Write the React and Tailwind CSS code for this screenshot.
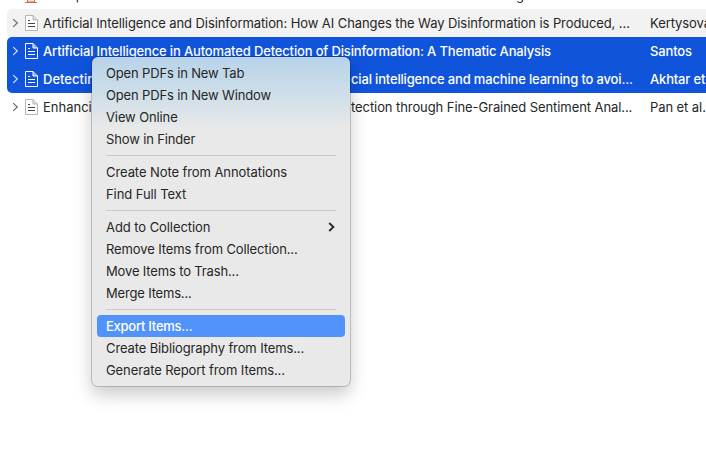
const rows = [
  { title: 'Artificial Intelligence and Disinformation: How AI Changes the Way Disinformation is Produced, ...', creator: 'Kertysova', cls: 'bg-[#f2f2f2] rounded-l-[5px] text-[#262626]', track: 'tracking-[-0.085px]' },
  { title: 'Artificial Intelligence in Automated Detection of Disinformation: A Thematic Analysis', creator: 'Santos', selected: true, cls: 'bg-[#1054dc] rounded-tl-[5px] text-white font-medium', track: 'tracking-[-0.155px]' },
  { head: 'Detecting', tail: 'cial intelligence and machine learning to avoi...', creator: 'Akhtar et al.', selected: true, cls: 'bg-[#1054dc] rounded-bl-[5px] text-white font-medium', track: 'tracking-[-0.17px]' },
  { head: 'Enhancing', tail: 'tection through Fine-Grained Sentiment Anal...', creator: 'Pan et al.', cls: 'text-[#262626]', track: 'tracking-[-0.08px]' },
];

function DocIcon({ selected }) {
  const edge = selected ? '#ffffff' : '#b5b5b5';
  const line = selected ? '#ffffff' : '#444444';
  return (
    <svg className="ml-[6px] h-4 w-[13px] shrink-0" viewBox="0 0 13 16" fill="none">
      <path d="M.5.5H8l4.5 4.5v10.500H.5z" fill={selected ? 'none' : '#fff'} stroke={edge} />
      <path d="M8 .5V5h4.500" stroke={edge} fill={selected ? '#8fb0f0' : '#dddddd'} />
      <path d="M3 5.500h2M3 8.500h7M3 11.500h7" stroke={line} />
    </svg>
  );
}

function Row({ row }) {
  return (
    <div className={'flex h-7 items-center pl-[5px] ' + row.cls}>
      <svg className="h-[10px] w-[7px] shrink-0" viewBox="0 0 7 10" fill="none">
        <path d="M1.200 1.200L5.300 5 1.200 8.800" stroke={row.selected ? '#dce6fb' : '#666'} strokeWidth="1.150" />
      </svg>
      <DocIcon selected={row.selected} />
      <div className="ml-[5px] flex w-[607px] shrink-0 pt-[2px]">
        {row.title ? <span className={row.track}>{row.title}</span> : (
          <>
            <span className="w-[308px] shrink-0">{row.head}</span>
            <span className={row.track}>{row.tail}</span>
          </>
        )}
      </div>
      <span className={'pt-[2px] ' + row.track}>{row.creator}</span>
    </div>
  );
}

function Item({ children, active, arrow, track = 'tracking-[-0.12px]' }) {
  return (
    <div className={'mx-[5px] flex h-[22px] items-center justify-between rounded-[4px] px-[9px] ' + (active ? 'bg-[#5293fb] font-medium text-white' : '')}>
      <span className={'pt-[2px] ' + track}>{children}</span>
      {arrow && (
        <svg className="mr-px h-[10px] w-[7px]" viewBox="0 0 7 10" fill="none">
          <path d="M1.200 1L5.400 5 1.200 9" stroke="#262626" strokeWidth="1.800" />
        </svg>
      )}
    </div>
  );
}

const Divider = () => <div className="mx-[14px] flex h-[11px] items-center"><div className="h-px w-full bg-[#c8c8c8]" /></div>;

export default function App() {
  return (
    <div className="relative h-[468px] w-[706px] overflow-hidden bg-white font-[Inter,'Liberation_Sans',sans-serif] text-[13px] whitespace-nowrap">
      <div className="flex h-[9px] items-end overflow-hidden pl-[25px] text-[#262626]">
        <div className="flex h-7 items-center">
          <svg className="h-4 w-3" viewBox="0 0 12 16">
            <path d="M2.500 4H9.500V15H2.500z" fill="#f9e3d9" stroke="#c8704e" />
            <path d="M0 15.500h12" stroke="#c8704e" />
          </svg>
          <span className="ml-[6px] w-[473px] pt-[2px]">A Step</span>
          <span className="pt-[2px]">g</span>
        </div>
      </div>
      <div className="pl-[7px]">
        {rows.map((row) => <Row key={row.creator} row={row} />)}
      </div>
      <div className="absolute top-[57px] left-[92px] w-[258px] rounded-[6px] bg-[#e9e9e9] bg-linear-to-b from-[#b7d3ea] via-[#cbdde8] via-[10%] to-[#e9e9e9] to-[22%] pt-[5px] pb-[5px] text-[#262626] shadow-[0_0_0_1px_rgba(0,0,0,0.18),0_8px_18px_rgba(0,0,0,0.22)]">
        <Item track="tracking-[-0.15px]">Open PDFs in New Tab</Item>
        <Item track="tracking-[-0.15px]">Open PDFs in New Window</Item>
        <Item>View Online</Item>
        <Item track="tracking-[-0.15px]">Show in Finder</Item>
        <Divider />
        <Item track="tracking-[-0.08px]">Create Note from Annotations</Item>
        <Item track="tracking-[-0.08px]">Find Full Text</Item>
        <Divider />
        <Item arrow track="tracking-[-0.07px]">Add to Collection</Item>
        <Item>Remove Items from Collection...</Item>
        <Item track="tracking-[-0.15px]">Move Items to Trash...</Item>
        <Item track="tracking-[-0.18px]">Merge Items...</Item>
        <Divider />
        <Item active track="tracking-[-0.25px]">Export Items...</Item>
        <Item>Create Bibliography from Items...</Item>
        <Item track="tracking-[-0.1px]">Generate Report from Items...</Item>
      </div>
    </div>
  );
}
